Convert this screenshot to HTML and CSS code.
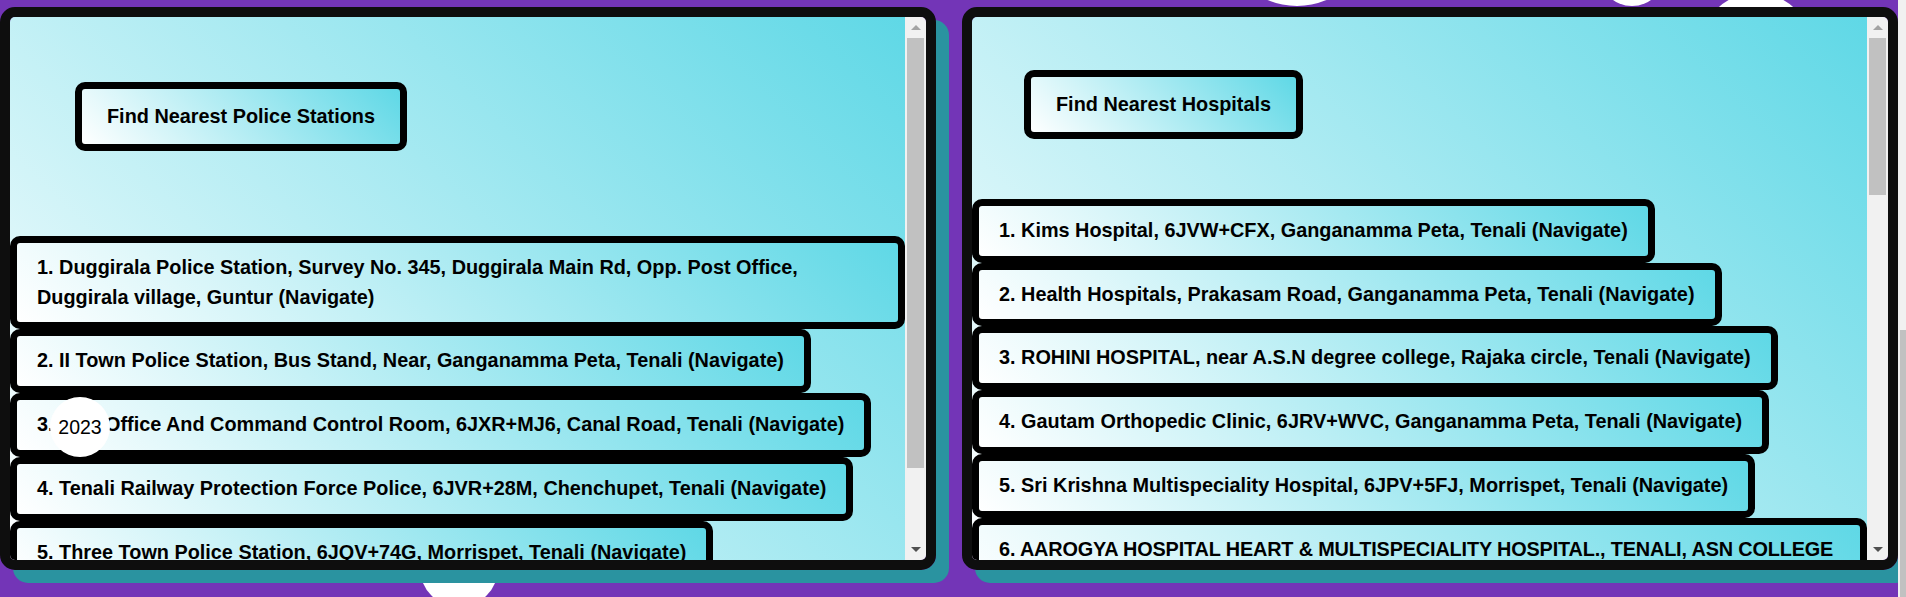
FILE: index.html
```html
<!DOCTYPE html>
<html lang="en">
<head>
<meta charset="utf-8">
<title>Nearest Police Stations and Hospitals</title>
<link rel="stylesheet" href="styles.css">
</head>
<body>
<div class="page">
  <main class="panels">
    <section class="panel police">
      <div class="panel-body">
        <button class="find-btn">Find Nearest Police Stations</button>
        <ol class="results">
          <li class="result">1. Duggirala Police Station, Survey No. 345, Duggirala Main Rd, Opp. Post Office, Duggirala village, Guntur <a class="nav">(Navigate)</a></li>
          <li class="result">2. II Town Police Station, Bus Stand, Near, Ganganamma Peta, Tenali <a class="nav">(Navigate)</a></li>
          <li class="result">3. DSP Office And Command Control Room, 6JXR+MJ6, Canal Road, Tenali <a class="nav">(Navigate)</a></li>
          <li class="result">4. Tenali Railway Protection Force Police, 6JVR+28M, Chenchupet, Tenali <a class="nav">(Navigate)</a></li>
          <li class="result">5. Three Town Police Station, 6JQV+74G, Morrispet, Tenali <a class="nav">(Navigate)</a></li>
        </ol>
      </div>
      <div class="scrollbar">
        <div class="sb-btn"><span class="arrow-up"></span></div>
        <div class="sb-track"><div class="sb-thumb" style="height:430px"></div></div>
        <div class="sb-btn"><span class="arrow-down"></span></div>
      </div>
    </section>
    <section class="panel hospital">
      <div class="panel-body">
        <button class="find-btn">Find Nearest Hospitals</button>
        <ol class="results">
          <li class="result">1. Kims Hospital, 6JVW+CFX, Ganganamma Peta, Tenali <a class="nav">(Navigate)</a></li>
          <li class="result">2. Health Hospitals, Prakasam Road, Ganganamma Peta, Tenali <a class="nav">(Navigate)</a></li>
          <li class="result">3. ROHINI HOSPITAL, near A.S.N degree college, Rajaka circle, Tenali <a class="nav">(Navigate)</a></li>
          <li class="result">4. Gautam Orthopedic Clinic, 6JRV+WVC, Ganganamma Peta, Tenali <a class="nav">(Navigate)</a></li>
          <li class="result">5. Sri Krishna Multispeciality Hospital, 6JPV+5FJ, Morrispet, Tenali <a class="nav">(Navigate)</a></li>
          <li class="result result-caps">6. AAROGYA HOSPITAL HEART &amp; MULTISPECIALITY HOSPITAL., TENALI, ASN COLLEGE ROAD, Tenali <a class="nav">(Navigate)</a></li>
        </ol>
      </div>
      <div class="scrollbar">
        <div class="sb-btn"><span class="arrow-up"></span></div>
        <div class="sb-track"><div class="sb-thumb" style="height:157px"></div></div>
        <div class="sb-btn"><span class="arrow-down"></span></div>
      </div>
    </section>
  </main>
  <div class="page-scrollbar"><div class="page-thumb"></div></div>
</div>
<div class="bubble bubble-a"></div>
<div class="bubble bubble-b"></div>
<div class="bubble bubble-c"></div>
<div class="bubble bubble-d"></div>
<div class="bubble bubble-year">2023</div>
</body>
</html>
```

FILE: styles.css
```css
html, body {
  margin: 0;
  height: 100%;
  overflow: hidden;
}

body {
  background: #7335b7;
  font-family: "Liberation Sans", Arial, sans-serif;
  position: relative;
}

.page {
  display: flex;
  height: 597px;
}

.panels {
  display: flex;
  align-items: flex-start;
  gap: 26px;
  padding-top: 7px;
  position: relative;
  z-index: 1;
}

.panel {
  width: 936px;
  height: 563px;
  box-sizing: border-box;
  border: 10px solid #0e0e0e;
  border-radius: 15px;
  box-shadow: 13px 13px 0 #2a93a0;
  display: flex;
  overflow: hidden;
}

.panel-body {
  flex: 1;
  min-width: 0;
  overflow: hidden;
  background: linear-gradient(45deg, #ffffff, #5fd8e6);
}

.find-btn {
  display: block;
  font: bold 19.85px/29.7px "Liberation Sans", Arial, sans-serif;
  color: #000;
  padding: 12.65px 25px;
  border: 7px solid #000;
  border-radius: 10px;
  background: linear-gradient(45deg, #ffffff, #5fd8e6);
}

.police .find-btn {
  margin: 65px 0 0 65px;
}

.hospital .find-btn {
  margin: 53px 0 0 52px;
}

.results {
  list-style: none;
  margin: 0;
  padding: 0;
}

.police .results {
  margin-top: 85px;
}

.hospital .results {
  margin-top: 60px;
}

.result {
  width: fit-content;
  max-width: 100%;
  box-sizing: border-box;
  border: 7px solid #000;
  border-radius: 10px;
  padding: 10px 20px;
  font-weight: bold;
  font-size: 19.85px;
  line-height: 29.7px;
  color: #000;
  background: linear-gradient(45deg, #ffffff, #5fd8e6);
}

.result-caps {
  letter-spacing: -0.15px;
}

.nav {
  color: inherit;
  text-decoration: none;
}

.scrollbar {
  width: 21px;
  flex: none;
  display: flex;
  flex-direction: column;
  background: #f1f1f1;
}

.sb-btn {
  height: 21px;
  flex: none;
  display: flex;
  align-items: center;
  justify-content: center;
}

.arrow-up {
  width: 0;
  height: 0;
  border-left: 5px solid transparent;
  border-right: 5px solid transparent;
  border-bottom: 5px solid #a3a3a3;
}

.arrow-down {
  width: 0;
  height: 0;
  border-left: 5px solid transparent;
  border-right: 5px solid transparent;
  border-top: 5px solid #505050;
}

.sb-track {
  flex: 1;
  padding: 0 2px;
}

.sb-thumb {
  background: #c1c1c1;
}

.page-scrollbar {
  width: 8px;
  flex: none;
  box-sizing: border-box;
  padding: 330px 0 0 2px;
  background: #f1f1f1;
  position: relative;
  z-index: 2;
  display: flex;
}

.page-thumb {
  flex: 1;
  background: #c1c1c1;
}

.bubble {
  position: absolute;
  border-radius: 50%;
  background: #fff;
  z-index: 0;
}

.bubble-a {
  left: 1222px;
  top: -144px;
  width: 150px;
  height: 150px;
}

.bubble-b {
  left: 1599px;
  top: -60px;
  width: 66px;
  height: 66px;
}

.bubble-c {
  left: 1699px;
  top: -7px;
  width: 114px;
  height: 114px;
}

.bubble-d {
  left: 420px;
  top: 529px;
  width: 78px;
  height: 78px;
}

.bubble-year {
  left: 50px;
  top: 397px;
  width: 60px;
  height: 60px;
  z-index: 3;
  display: flex;
  align-items: center;
  justify-content: center;
  font-size: 19.5px;
  color: #000;
}
```
